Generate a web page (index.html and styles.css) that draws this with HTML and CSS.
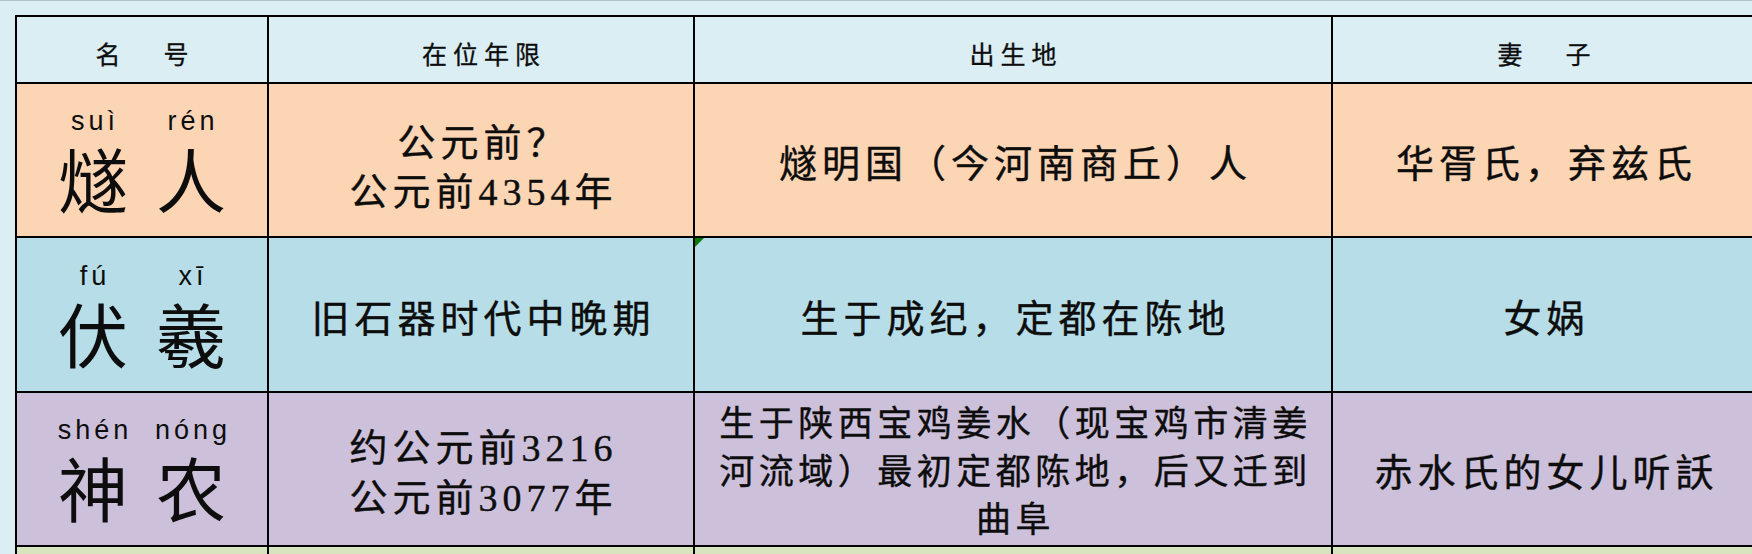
FILE: index.html
```html
<!DOCTYPE html>
<html lang="zh-CN">
<head>
<meta charset="utf-8">
<title>三皇</title>
<link rel="stylesheet" href="styles.css">
</head>
<body>
<div class="sheet">
  <div class="grid">
    <div class="cell head"><span>名</span><span class="gap"></span><span>号</span></div>
    <div class="cell head">在位年限</div>
    <div class="cell head">出生地</div>
    <div class="cell head"><span>妻</span><span class="gap"></span><span>子</span></div>

    <div class="cell name peach">
      <div class="syl"><span class="py">suì</span><span class="hz">燧</span></div>
      <div class="syl"><span class="py">rén</span><span class="hz">人</span></div>
    </div>
    <div class="cell txt low peach">公元前？<br>公元前4354年</div>
    <div class="cell txt peach">燧明国（今河南商丘）人</div>
    <div class="cell txt peach">华胥氏，弃兹氏</div>

    <div class="cell name aqua">
      <div class="syl"><span class="py">fú</span><span class="hz">伏</span></div>
      <div class="syl"><span class="py">xī</span><span class="hz">羲</span></div>
    </div>
    <div class="cell txt aqua">旧石器时代中晚期</div>
    <div class="cell txt aqua flagged">生于成纪，定都在陈地</div>
    <div class="cell txt aqua">女娲</div>

    <div class="cell name lilac">
      <div class="syl"><span class="py">shén</span><span class="hz">神</span></div>
      <div class="syl"><span class="py">nóng</span><span class="hz">农</span></div>
    </div>
    <div class="cell txt lilac">约公元前3216<br>公元前3077年</div>
    <div class="cell txt small lilac">生于陕西宝鸡姜水（现宝鸡市清姜<br>河流域）最初定都陈地，后又迁到<br>曲阜</div>
    <div class="cell txt lilac">赤水氏的女儿听訞</div>

    <div class="cell green"></div>
    <div class="cell green"></div>
    <div class="cell green"></div>
    <div class="cell green"></div>
  </div>
</div>
</body>
</html>
```

FILE: styles.css
```css
html, body {
  margin: 0;
  padding: 0;
  width: 1752px;
  height: 554px;
  overflow: hidden;
  background: #daeef3;
}

.sheet {
  border-top: 1px solid #b2c4c8;
  padding: 14px 0 0 15px;
}

.grid {
  display: grid;
  grid-template-columns: 252px 426px 638px 424px;
  grid-template-rows: 67px 154px 155px 154px 20px;
  width: max-content;
  border-top: 2px solid #000;
  border-left: 2px solid #000;
}

.cell {
  box-sizing: border-box;
  border-right: 2px solid #000;
  border-bottom: 2px solid #000;
  display: flex;
  align-items: center;
  justify-content: center;
  text-align: center;
  color: #0d0d0d;
  position: relative;
}

.head {
  background: #daeef3;
  font-family: "Noto Sans CJK SC", sans-serif;
  font-size: 25px;
  letter-spacing: 6px;
  padding-top: 6px;
  padding-left: 6px;
  -webkit-text-stroke: 0.3px #0d0d0d;
}

.gap {
  display: inline-block;
  width: 37px;
}

.peach { background: #fcd5b4; }
.aqua { background: #b7dee8; }
.lilac { background: #ccc0da; }
.green { background: #d7e4bd; border-bottom: none; }

.txt {
  font-family: "Liberation Serif", "Noto Sans CJK SC", serif;
  font-size: 38px;
  line-height: 50px;
  letter-spacing: 5px;
  padding-top: 8px;
  padding-left: 5px;
  -webkit-text-stroke: 0.4px #0d0d0d;
}

.low {
  line-height: 49px;
  padding-top: 15px;
}

.small {
  font-size: 35px;
  line-height: 48px;
  letter-spacing: 4.5px;
  padding-top: 8px;
}

.syl {
  width: 98px;
  display: flex;
  flex-direction: column;
  align-items: center;
}

.py {
  font-family: "Liberation Sans", Arial, sans-serif;
  font-size: 27px;
  line-height: 30px;
  letter-spacing: 4px;
  padding-left: 4px;
}

.hz {
  font-family: "Noto Sans CJK SC", sans-serif;
  font-size: 70px;
  line-height: 72px;
  margin-top: 6px;
}

.flagged::before {
  content: "";
  position: absolute;
  left: 0;
  top: 0;
  width: 0;
  height: 0;
  border-top: 9px solid #0b7a0b;
  border-right: 9px solid transparent;
}
```
